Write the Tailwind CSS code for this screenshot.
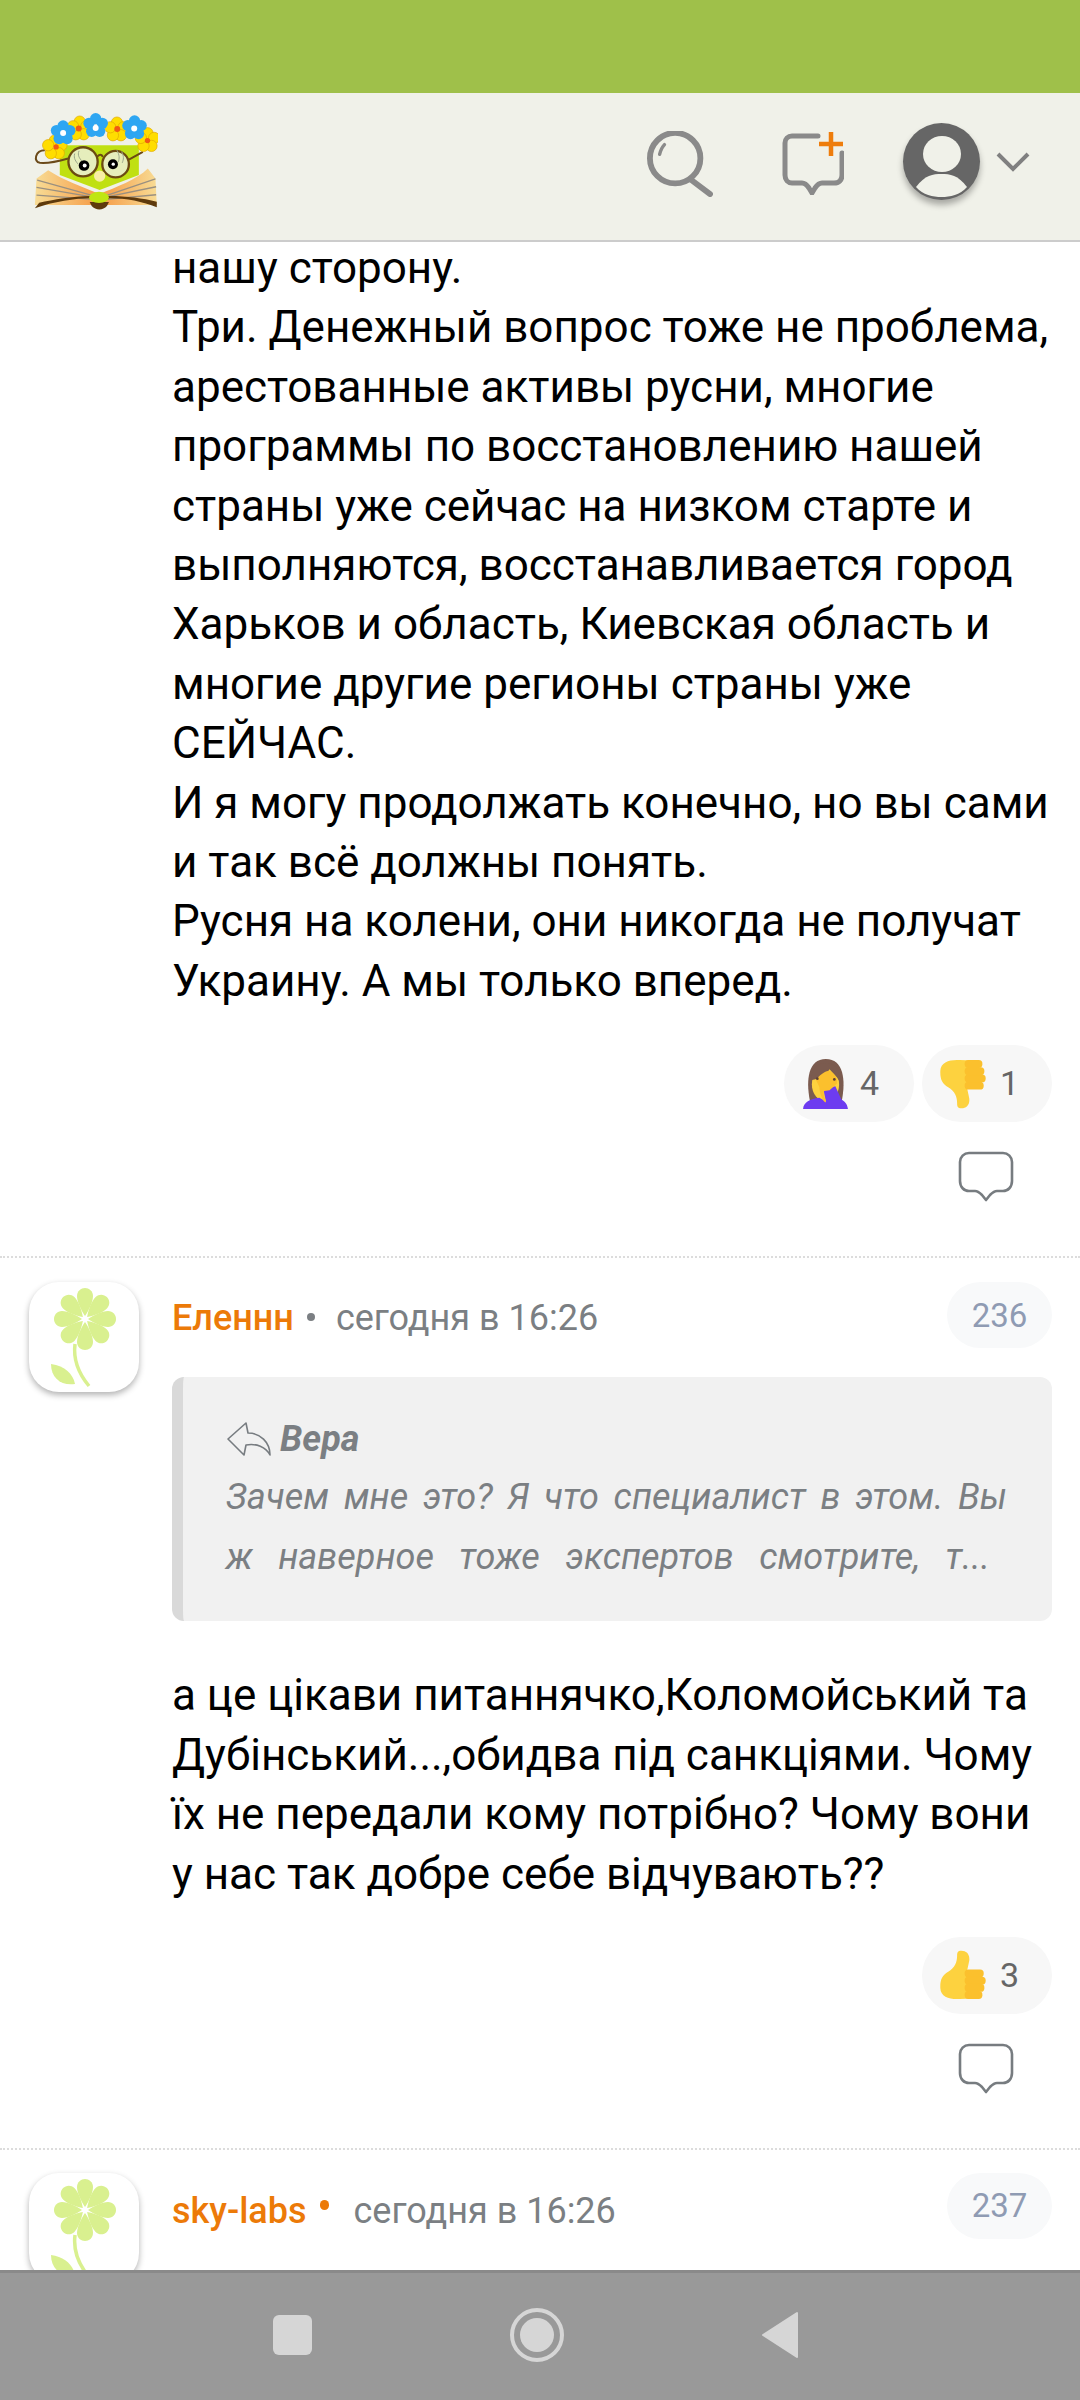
<!DOCTYPE html>
<html lang="ru">
<head>
    <meta charset="UTF-8">
    <meta name="viewport" content="width=device-width, initial-scale=1.0">
    <title>Comments</title>
    <script src="https://cdn.jsdelivr.net/npm/@tailwindcss/browser@4"></script>
</head>
<body class="bg-white">

<div class="w-[1080px] h-[2400px] flex flex-col overflow-hidden font-[Roboto,sans-serif] text-black">

    <!-- Shared svg defs -->
    <svg width="0" height="0" class="absolute">
        <defs>
            <g id="flower">
                <g fill="#d9f08f">
                    <path d="M56 34 C52 28 48 20 48 14 C48 9 52 6 56 6 C60 6 64 9 64 14 C64 20 60 28 56 34Z"/>
                    <path d="M56 34 C52 28 48 20 48 14 C48 9 52 6 56 6 C60 6 64 9 64 14 C64 20 60 28 56 34Z" transform="rotate(45 56 37)"/>
                    <path d="M56 34 C52 28 48 20 48 14 C48 9 52 6 56 6 C60 6 64 9 64 14 C64 20 60 28 56 34Z" transform="rotate(90 56 37)"/>
                    <path d="M56 34 C52 28 48 20 48 14 C48 9 52 6 56 6 C60 6 64 9 64 14 C64 20 60 28 56 34Z" transform="rotate(135 56 37)"/>
                    <path d="M56 34 C52 28 48 20 48 14 C48 9 52 6 56 6 C60 6 64 9 64 14 C64 20 60 28 56 34Z" transform="rotate(180 56 37)"/>
                    <path d="M56 34 C52 28 48 20 48 14 C48 9 52 6 56 6 C60 6 64 9 64 14 C64 20 60 28 56 34Z" transform="rotate(225 56 37)"/>
                    <path d="M56 34 C52 28 48 20 48 14 C48 9 52 6 56 6 C60 6 64 9 64 14 C64 20 60 28 56 34Z" transform="rotate(270 56 37)"/>
                    <path d="M56 34 C52 28 48 20 48 14 C48 9 52 6 56 6 C60 6 64 9 64 14 C64 20 60 28 56 34Z" transform="rotate(315 56 37)"/>
                    <path d="M22 82 C36 84 44 92 46 102 C32 104 22 96 22 82Z"/>
                </g>
                <path d="M46 62 C44 78 50 92 60 104" fill="none" stroke="#d9f08f" stroke-width="3.5"/>
            </g>
            <g id="bubble">
                <path d="M11 2 H45 C50 2 54 6 54 11 V30 C54 36 50 40 45 40 H39 C36 40 34 42 32 44 L28 49 L24 44 C22 42 20 40 17 40 H11 C6 40 2 36 2 30 V11 C2 6 6 2 11 2Z" fill="none" stroke="#777c80" stroke-width="2.6" stroke-linejoin="round"/>
            </g>
            <g id="thumb">
                <path d="M238 92 C256 88 272 98 269 122 L263 150 L300 150 L300 236 L240 238 C210 240 182 232 181 205 C180 180 186 166 205 155 C225 144 232 125 232 108 C232 98 233 94 238 92Z" fill="#fdd23f"/>
                <g fill="#fbc02d">
                    <rect x="255" y="148" width="58" height="24" rx="11"/>
                    <rect x="255" y="170" width="64" height="24" rx="11"/>
                    <rect x="255" y="192" width="60" height="24" rx="11"/>
                    <rect x="255" y="214" width="54" height="24" rx="11"/>
                </g>
            </g>
        </defs>
    </svg>

    <!-- Status bar -->
    <div class="h-[93px] shrink-0 bg-[#9fc04a]"></div>

    <!-- Header -->
    <header class="h-[149px] shrink-0 bg-[#f0f1e9] border-b-2 border-[#cccccc] flex items-center pl-[33px] pr-[50px]">
        <svg width="125" height="98" viewBox="40 65 375 295" class="mb-[11px]">
            <defs>
                <g id="logo-blue">
                    <circle cx="0" cy="-21" r="17"/><circle cx="20" cy="-7" r="17"/><circle cx="12" cy="17" r="17"/><circle cx="-12" cy="17" r="17"/><circle cx="-20" cy="-7" r="17"/>
                </g>
                <linearGradient id="page-l" x1="0" x2="1"><stop offset="0" stop-color="#f8dc95"/><stop offset="1" stop-color="#f59a45"/></linearGradient>
                <linearGradient id="page-r" x1="1" x2="0"><stop offset="0" stop-color="#f8dc95"/><stop offset="1" stop-color="#f59a45"/></linearGradient>
            </defs>
            <path d="M120 165 H358 V255 L240 300 L120 255Z" fill="#c0e012"/>
            <path d="M75 180 C45 180 40 215 60 218 C80 220 110 215 145 205" fill="none" stroke="#6b4a1a" stroke-width="6"/>
            <circle cx="190" cy="215" r="44" fill="#e6eebc" stroke="#6b4a12" stroke-width="7"/>
            <circle cx="288" cy="222" r="40" fill="#e6eebc" stroke="#6b4a12" stroke-width="7"/>
            <path d="M232 200 C240 192 245 192 250 200 M328 208 L370 185" fill="none" stroke="#6b4a12" stroke-width="6"/>
            <path d="M165 190 C160 205 170 215 175 222 M178 182 C172 195 180 205 186 212 M292 180 C300 195 300 205 296 215 M306 184 C314 198 312 208 308 218" fill="none" stroke="#9aa58a" stroke-width="3"/>
            <circle cx="193" cy="226" r="16" fill="#000"/><circle cx="195" cy="226" r="6" fill="#fff"/>
            <circle cx="280" cy="222" r="15" fill="#000"/><circle cx="281" cy="222" r="5" fill="#fff"/>
            <g fill="#ffdd00" stroke="#e0a800" stroke-width="2">
                <use href="#logo-blue" transform="translate(105 172)"/>
                <use href="#logo-blue" transform="translate(180 115)"/>
                <use href="#logo-blue" transform="translate(292 118)"/>
                <use href="#logo-blue" transform="translate(384 150)"/>
            </g>
            <g fill="#f05a14"><circle cx="177" cy="115" r="9"/><circle cx="293" cy="116" r="9"/><circle cx="384" cy="151" r="8"/><circle cx="109" cy="170" r="8"/></g>
            <g fill="#2ea6f2">
                <use href="#logo-blue" transform="translate(130 128)"/>
                <use href="#logo-blue" transform="translate(228 106)"/>
                <use href="#logo-blue" transform="translate(345 113)"/>
            </g>
            <g fill="#fff"><circle cx="130" cy="128" r="9"/><circle cx="228" cy="113" r="9"/><circle cx="344" cy="115" r="9"/></g>
            <circle cx="240" cy="258" r="17" fill="#f8eda5"/>
            <path d="M45 345 L50 265 L85 240 C130 270 190 290 240 312 V345Z" fill="url(#page-l)"/>
            <path d="M412 345 L408 265 L385 235 C350 270 290 290 240 312 V345Z" fill="url(#page-r)"/>
            <path d="M52 270 L225 318 M50 292 L225 322 M50 315 L220 328 M408 266 L255 318 M410 290 L255 322 M410 314 L260 328" stroke="#9a9080" stroke-width="4" fill="none"/>
            <path d="M45 355 C100 335 170 325 210 325 L240 345 L270 325 C320 325 370 335 412 352 V335 C370 325 320 318 270 318 H210 C160 318 100 330 58 338Z" fill="#5e3a0c"/>
            <path d="M210 336 H268 L262 348 C250 362 228 362 216 348Z" fill="#5e3a0c"/>
            <ellipse cx="238" cy="322" rx="30" ry="17" fill="#bfe612"/>
        </svg>

        <div class="ml-auto flex items-center">
            <svg width="66" height="66" viewBox="0 0 68 68" class="mb-[6px]">
                <circle cx="29" cy="28" r="26" fill="none" stroke="#8a8a8a" stroke-width="6"/>
                <path d="M13 24 C14 20 15 17 18 14" fill="none" stroke="#8a8a8a" stroke-width="3.5" stroke-linecap="round"/>
                <path d="M45 50 L65 65" fill="none" stroke="#8a8a8a" stroke-width="6" stroke-linecap="round"/>
            </svg>
            <svg width="62" height="64" viewBox="0 0 62 64" class="ml-[69px] mb-[7px]">
                <path d="M36 5 H10 C6 5 3 8 3 12 V44 C3 49 6 52 10 52 H20 C23 52 25 54 27 57 L30 62 L33 57 C35 54 37 52 40 52 H52 C57 52 60 49 60 44 V22" fill="none" stroke="#8a8a8a" stroke-width="5" stroke-linecap="round"/>
                <path d="M37 13 H61 M49 1 V25" stroke="#ee7d0c" stroke-width="4.5" fill="none"/>
            </svg>
            <div class="ml-[59px] w-[77px] h-[77px] rounded-full bg-[#666666] shadow-[0_5px_6px_rgba(0,0,0,0.3)] mb-[10px]">
                <svg width="77" height="77" viewBox="0 0 77 77">
                    <ellipse cx="39" cy="31" rx="19" ry="18" fill="#f0f1e9"/>
                    <path d="M13 64 C22 52 30 51 38.5 51 C47 51 55 52 64 64 C57 72 47 74 38.5 74 C30 74 20 72 13 64Z" fill="#f0f1e9"/>
                </svg>
            </div>
            <svg width="34" height="20" viewBox="0 0 34 20" class="ml-[16px] mb-[10px]">
                <path d="M2 2 L17 17 L32 2" fill="none" stroke="#808080" stroke-width="4"/>
            </svg>
        </div>
    </header>

    <!-- Comments list -->
    <main class="flex-1 min-h-0 overflow-hidden">

        <!-- Comment, tail of the text -->
        <section class="pl-[172px] pr-[28px] mt-[-3px] border-b-2 border-dotted border-[#dcdcdc] pb-[54px]">
            <p class="text-[44px] leading-[59.4px] whitespace-nowrap">
                нашу сторону.<br>
                Три. Денежный вопрос тоже не проблема,<br>
                арестованные активы русни, многие<br>
                программы по восстановлению нашей<br>
                страны уже сейчас на низком старте и<br>
                выполняются, восстанавливается город<br>
                Харьков и область, Киевская область и<br>
                многие другие регионы страны уже<br>
                СЕЙЧАС.<br>
                И я могу продолжать конечно, но вы сами<br>
                и так всё должны понять.<br>
                Русня на колени, они никогда не получат<br>
                Украину. А мы только вперед.
            </p>
            <div class="mt-[34px] flex justify-end gap-[8px]">
                <div class="w-[130px] h-[77px] rounded-full bg-[#f7f7f7] flex items-center pl-[19px] gap-[12px] text-[34px] text-[#666666]">
                    <svg width="45" height="50" viewBox="190 118 132 147">
                        <path d="M210 240 C198 180 205 118 257 118 C309 118 316 180 304 240Z" fill="#7b5b4f"/>
                        <ellipse cx="256" cy="192" rx="40" ry="50" fill="#fdd23f"/>
                        <path d="M216 180 C236 176 258 166 268 148 C278 160 290 170 296 182 C300 160 290 130 257 130 C226 130 214 155 216 180Z" fill="#7b5b4f"/>
                        <path d="M190 265 C192 245 210 236 238 232 L262 246 L290 232 C310 238 320 248 322 265Z" fill="#6d3cf0"/>
                        <path d="M262 265 L250 208 L285 198 L304 240 L300 265Z" fill="#6d3cf0"/>
                        <path d="M228 180 C238 166 254 154 268 152 C282 162 292 172 290 190 L268 210 L252 212 C246 230 262 240 256 246 C246 240 238 214 238 200Z" fill="#fbc02d"/>
                        <circle cx="232" cy="176" r="4" fill="#5d4037"/>
                        <circle cx="282" cy="178" r="4" fill="#5d4037"/>
                    </svg>
                    <span>4</span>
                </div>
                <div class="w-[130px] h-[77px] rounded-full bg-[#f7f7f7] flex items-center pl-[18px] gap-[14px] text-[34px] text-[#666666]">
                    <svg width="46" height="50" viewBox="180 90 140 150">
                        <use href="#thumb" transform="matrix(1 0 0 -1 0 330)"/>
                    </svg>
                    <span>1</span>
                </div>
            </div>
            <div class="mt-[29px] flex justify-end pr-[38px]">
                <svg width="56" height="51" viewBox="0 0 56 51"><use href="#bubble"/></svg>
            </div>
        </section>

        <!-- Comment 236 -->
        <section class="flex pl-[29px] pr-[28px] pt-[24px] border-b-2 border-dotted border-[#dcdcdc] pb-[54px]">
            <div class="w-[110px] h-[110px] shrink-0 rounded-[30px] bg-white shadow-[0_3px_6px_rgba(0,0,0,0.3)]">
                <svg width="110" height="110" viewBox="0 0 110 110"><use href="#flower"/></svg>
            </div>
            <div class="ml-[33px] flex-1 min-w-0">
                <div class="flex items-start">
                    <span class="mt-[15px] text-[36px] leading-[42px] font-medium text-[#ec7a08]">Еленнн</span>
                    <span class="mt-[31px] ml-[13px] w-[8px] h-[8px] rounded-full bg-[#7b7f83]"></span>
                    <span class="mt-[15px] ml-[21px] text-[36px] leading-[42px] text-[#7b7f83]">сегодня в 16:26</span>
                    <span class="ml-auto w-[105px] h-[66px] rounded-full bg-[#f8f9fa] flex items-center justify-center text-[33px] text-[#8f9bb3]">236</span>
                </div>
                <div class="mt-[29px] h-[244px] rounded-[12px] bg-[#f1f1f1] border-l-[11px] border-[#d9d9d9] pl-[43px] pr-[45px] pt-[42px] text-[36px] italic text-[#7b7f83]">
                    <div class="flex items-center h-[40px]">
                        <svg width="46" height="34" viewBox="0 0 46 34">
                            <path d="M20 1 L2 17 L18 33 L20 23 C30 21 40 25 44 33 C44 20 34 11 22 11Z" fill="none" stroke="#777c80" stroke-width="1.6" stroke-linejoin="round"/>
                        </svg>
                        <span class="ml-[8px] font-bold">Вера</span>
                    </div>
                    <div class="mt-[8px] leading-[60px]">
                        <div class="[text-align-last:justify] whitespace-nowrap">Зачем мне это? Я что специалист в этом. Вы</div>
                        <div class="[text-align-last:justify] whitespace-nowrap pr-[17px]">ж наверное тоже экспертов смотрите, т...</div>
                    </div>
                </div>
                <p class="mt-[45px] text-[44px] leading-[59.4px] whitespace-nowrap">
                    а це цікави питаннячко,Коломойський та<br>
                    Дубінський...,обидва під санкціями. Чому<br>
                    їх не передали кому потрібно? Чому вони<br>
                    у нас так добре себе відчувають??
                </p>
                <div class="mt-[33px] flex justify-end">
                    <div class="w-[130px] h-[77px] rounded-full bg-[#f7f7f7] flex items-center pl-[18px] gap-[14px] text-[34px] text-[#666666]">
                        <svg width="46" height="50" viewBox="180 90 140 150"><use href="#thumb"/></svg>
                        <span>3</span>
                    </div>
                </div>
                <div class="mt-[29px] flex justify-end pr-[38px]">
                    <svg width="56" height="51" viewBox="0 0 56 51"><use href="#bubble"/></svg>
                </div>
            </div>
        </section>

        <!-- Comment 237 -->
        <section class="flex pl-[29px] pr-[28px] pt-[23px]">
            <div class="w-[110px] h-[110px] shrink-0 rounded-[30px] bg-white shadow-[0_3px_6px_rgba(0,0,0,0.3)]">
                <svg width="110" height="110" viewBox="0 0 110 110"><use href="#flower"/></svg>
            </div>
            <div class="ml-[33px] flex-1 min-w-0">
                <div class="flex items-start">
                    <span class="mt-[17px] text-[36px] leading-[42px] font-medium text-[#ec7a08]">sky-labs</span>
                    <span class="mt-[27px] ml-[13px] w-[9px] h-[10px] rounded-full bg-[#ec7a08]"></span>
                    <span class="mt-[17px] ml-[25px] text-[36px] leading-[42px] text-[#7b7f83]">сегодня в 16:26</span>
                    <span class="ml-auto w-[105px] h-[66px] rounded-full bg-[#f8f9fa] flex items-center justify-center text-[33px] text-[#8f9bb3]">237</span>
                </div>
            </div>
        </section>
    </main>

    <!-- Android nav bar -->
    <nav class="h-[130px] shrink-0 bg-[#999999] border-t-[3px] border-[#8a8a8a] flex items-center pb-[3px]">
        <div class="ml-[273px] w-[39px] h-[40px] rounded-[6px] bg-[#d6d6d6]"></div>
        <div class="ml-[198px] w-[54px] h-[54px] rounded-full border-[4px] border-[#d6d6d6] flex items-center justify-center">
            <div class="w-[34px] h-[34px] rounded-full bg-[#d6d6d6]"></div>
        </div>
        <svg width="38" height="48" viewBox="0 0 38 48" class="ml-[197px]">
            <path d="M36 2 V46 L2 24Z" fill="#d6d6d6" stroke="#d6d6d6" stroke-width="2" stroke-linejoin="round"/>
        </svg>
    </nav>
</div>

</body>
</html>
